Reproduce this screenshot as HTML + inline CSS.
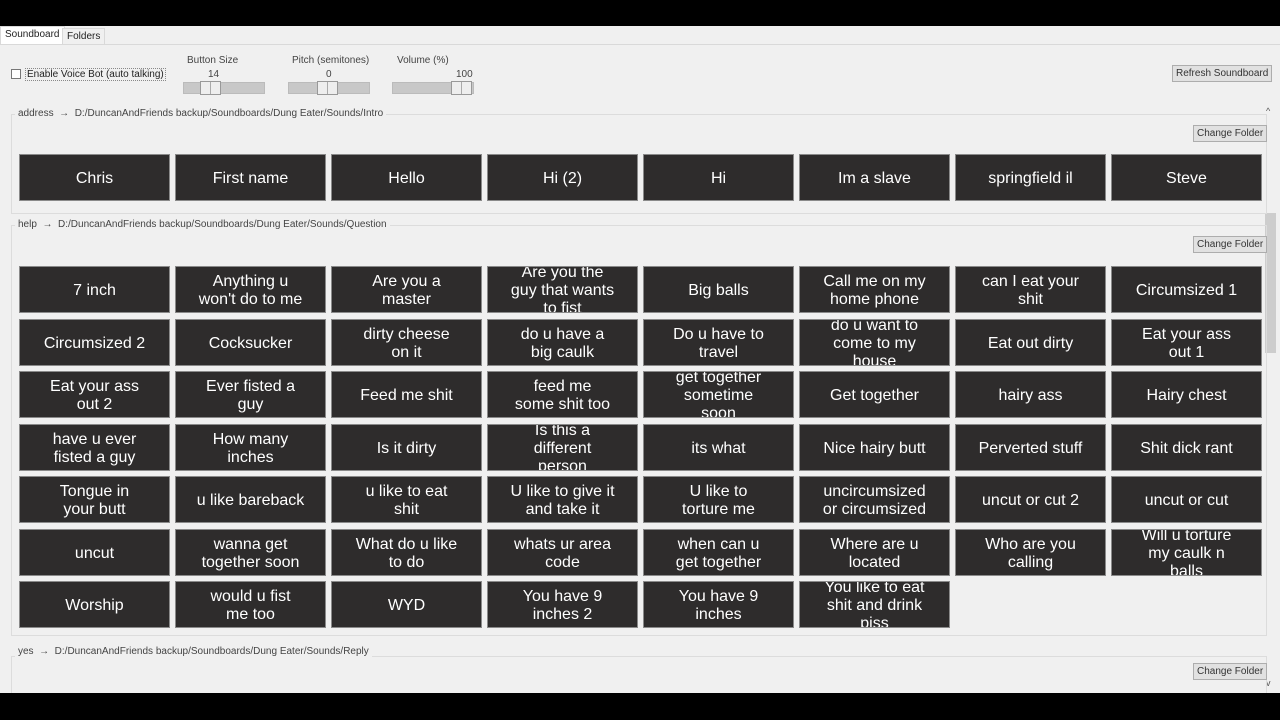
<!DOCTYPE html>
<html><head><meta charset="utf-8">
<style>
*{margin:0;padding:0;box-sizing:border-box}
body{width:1280px;height:720px;background:#000;position:relative;overflow:hidden;font-family:"Liberation Sans",Arial,sans-serif}
#app{position:absolute;left:0;top:26px;width:1280px;height:667px;background:#f0f0f0;overflow:hidden}
.abs{position:absolute}
.small{font-size:10px;color:#444}
.tab{position:absolute;top:2px;height:17px;font-size:10px;color:#222;padding:2px 4px;border:1px solid #d9d9d9;border-bottom:none}
.slider{position:absolute;height:12px;background:#c8c8c8;border:1px solid #bbb}
.thumb{position:absolute;top:-2px;width:21px;height:14px;background:#eee;border:1px solid #999}
.thumb:after{content:"";position:absolute;left:9px;top:0;width:1px;height:12px;background:#aaa}
.btn{position:absolute;font-size:10px;color:#333;background:#e1e1e1;border:1px solid #adadad;padding:2px 3px;white-space:nowrap}
.gb{position:absolute;left:11px;width:1256px;border:1px solid #dcdcdc}
.gt{position:absolute;font-size:10px;color:#444;background:#f0f0f0;padding:0 3px}
.sb{position:absolute;width:151px;height:47px;background:#2e2c2c;border:1px solid #8a8a8a;color:#fff;font-size:16px;line-height:18px;text-align:center;display:flex;align-items:center;justify-content:center;overflow:hidden;padding-top:2px}
</style></head><body>
<div id="app">
<div class="tab" style="left:0;background:#fff;top:0;height:19px">Soundboard</div>
<div class="tab" style="left:62px;background:#f0f0f0">Folders</div>
<div class="abs" style="left:0;top:18px;width:1280px;height:1px;background:#d9d9d9"></div>

<div class="abs" style="left:11px;top:43px;width:10px;height:10px;border:1px solid #777;background:#fff"></div>
<div class="abs small" style="left:25px;top:42px;color:#222;border:1px dotted #888;padding:0 1px">Enable Voice Bot (auto talking)</div>

<div class="abs small" style="left:187px;top:29px">Button Size</div>
<div class="abs small" style="left:208px;top:43px">14</div>
<div class="slider" style="left:183px;top:56px;width:82px"><div class="thumb" style="left:16px"></div></div>
<div class="abs small" style="left:292px;top:29px">Pitch (semitones)</div>
<div class="abs small" style="left:326px;top:43px">0</div>
<div class="slider" style="left:288px;top:56px;width:82px"><div class="thumb" style="left:28px"></div></div>
<div class="abs small" style="left:397px;top:29px">Volume (%)</div>
<div class="abs small" style="left:456px;top:43px">100</div>
<div class="slider" style="left:392px;top:56px;width:82px"><div class="thumb" style="left:58px"></div></div>

<div class="btn" style="left:1172px;top:39px">Refresh Soundboard</div>

<div class="abs" style="left:1262px;top:78px;width:16px;height:589px;background:#f0f0f0"></div>
<div class="abs" style="left:1266px;top:80px;font-size:9px;color:#555">^</div>
<div class="abs" style="left:1265px;top:187px;width:11px;height:140px;background:#cdcdcd"></div>
<div class="abs" style="left:1266px;top:652px;font-size:9px;color:#555">v</div>

<div class="gb" style="top:88px;height:100px"></div>
<div class="gt" style="left:15px;top:82px">address &nbsp;→&nbsp; D:/DuncanAndFriends backup/Soundboards/Dung Eater/Sounds/Intro</div>
<div class="btn" style="left:1193px;top:99px">Change Folder</div>
<div class="sb" style="left:19px;top:128px">Chris</div>
<div class="sb" style="left:175px;top:128px">First name</div>
<div class="sb" style="left:331px;top:128px">Hello</div>
<div class="sb" style="left:487px;top:128px">Hi (2)</div>
<div class="sb" style="left:643px;top:128px">Hi</div>
<div class="sb" style="left:799px;top:128px">Im a slave</div>
<div class="sb" style="left:955px;top:128px">springfield il</div>
<div class="sb" style="left:1111px;top:128px">Steve</div>

<div class="gb" style="top:199px;height:411px"></div>
<div class="gt" style="left:15px;top:193px">help &nbsp;→&nbsp; D:/DuncanAndFriends backup/Soundboards/Dung Eater/Sounds/Question</div>
<div class="btn" style="left:1193px;top:210px">Change Folder</div>

<div class="sb" style="left:19px;top:240px">7 inch</div>
<div class="sb" style="left:175px;top:240px">Anything u<br>won't do to me</div>
<div class="sb" style="left:331px;top:240px">Are you a<br>master</div>
<div class="sb" style="left:487px;top:240px">Are you the<br>guy that wants<br>to fist</div>
<div class="sb" style="left:643px;top:240px">Big balls</div>
<div class="sb" style="left:799px;top:240px">Call me on my<br>home phone</div>
<div class="sb" style="left:955px;top:240px">can I eat your<br>shit</div>
<div class="sb" style="left:1111px;top:240px">Circumsized 1</div>

<div class="sb" style="left:19px;top:293px">Circumsized 2</div>
<div class="sb" style="left:175px;top:293px">Cocksucker</div>
<div class="sb" style="left:331px;top:293px">dirty cheese<br>on it</div>
<div class="sb" style="left:487px;top:293px">do u have a<br>big caulk</div>
<div class="sb" style="left:643px;top:293px">Do u have to<br>travel</div>
<div class="sb" style="left:799px;top:293px">do u want to<br>come to my<br>house</div>
<div class="sb" style="left:955px;top:293px">Eat out dirty</div>
<div class="sb" style="left:1111px;top:293px">Eat your ass<br>out 1</div>

<div class="sb" style="left:19px;top:345px">Eat your ass<br>out 2</div>
<div class="sb" style="left:175px;top:345px">Ever fisted a<br>guy</div>
<div class="sb" style="left:331px;top:345px">Feed me shit</div>
<div class="sb" style="left:487px;top:345px">feed me<br>some shit too</div>
<div class="sb" style="left:643px;top:345px">get together<br>sometime<br>soon</div>
<div class="sb" style="left:799px;top:345px">Get together</div>
<div class="sb" style="left:955px;top:345px">hairy ass</div>
<div class="sb" style="left:1111px;top:345px">Hairy chest</div>

<div class="sb" style="left:19px;top:398px">have u ever<br>fisted a guy</div>
<div class="sb" style="left:175px;top:398px">How many<br>inches</div>
<div class="sb" style="left:331px;top:398px">Is it dirty</div>
<div class="sb" style="left:487px;top:398px">Is this a<br>different<br>person</div>
<div class="sb" style="left:643px;top:398px">its what</div>
<div class="sb" style="left:799px;top:398px">Nice hairy butt</div>
<div class="sb" style="left:955px;top:398px">Perverted stuff</div>
<div class="sb" style="left:1111px;top:398px">Shit dick rant</div>

<div class="sb" style="left:19px;top:450px">Tongue in<br>your butt</div>
<div class="sb" style="left:175px;top:450px">u like bareback</div>
<div class="sb" style="left:331px;top:450px">u like to eat<br>shit</div>
<div class="sb" style="left:487px;top:450px">U like to give it<br>and take it</div>
<div class="sb" style="left:643px;top:450px">U like to<br>torture me</div>
<div class="sb" style="left:799px;top:450px">uncircumsized<br>or circumsized</div>
<div class="sb" style="left:955px;top:450px">uncut or cut 2</div>
<div class="sb" style="left:1111px;top:450px">uncut or cut</div>

<div class="sb" style="left:19px;top:503px">uncut</div>
<div class="sb" style="left:175px;top:503px">wanna get<br>together soon</div>
<div class="sb" style="left:331px;top:503px">What do u like<br>to do</div>
<div class="sb" style="left:487px;top:503px">whats ur area<br>code</div>
<div class="sb" style="left:643px;top:503px">when can u<br>get together</div>
<div class="sb" style="left:799px;top:503px">Where are u<br>located</div>
<div class="sb" style="left:955px;top:503px">Who are you<br>calling</div>
<div class="sb" style="left:1111px;top:503px">Will u torture<br>my caulk n<br>balls</div>

<div class="sb" style="left:19px;top:555px">Worship</div>
<div class="sb" style="left:175px;top:555px">would u fist<br>me too</div>
<div class="sb" style="left:331px;top:555px">WYD</div>
<div class="sb" style="left:487px;top:555px">You have 9<br>inches 2</div>
<div class="sb" style="left:643px;top:555px">You have 9<br>inches</div>
<div class="sb" style="left:799px;top:555px">You like to eat<br>shit and drink<br>piss</div>

<div class="gb" style="top:630px;height:60px"></div>
<div class="gt" style="left:15px;top:620px">yes &nbsp;→&nbsp; D:/DuncanAndFriends backup/Soundboards/Dung Eater/Sounds/Reply</div>
<div class="btn" style="left:1193px;top:637px">Change Folder</div>
</div>
</body></html>
